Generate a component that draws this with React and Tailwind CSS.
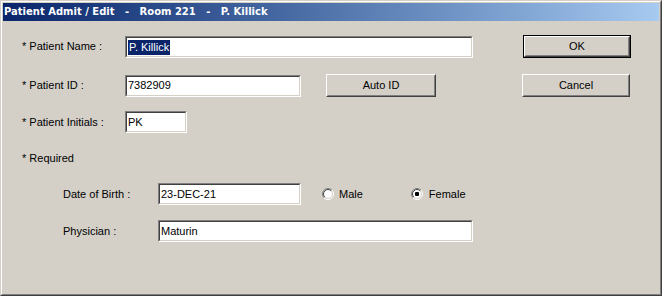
import React from "react";

const font = { fontFamily: '"Liberation Sans", Arial, sans-serif' };

function Sunken({ className = "", children }) {
  return (
    <div className={"border border-t-[#808080] border-l-[#808080] border-b-white border-r-white " + className}>
      <div className="h-full w-full border border-t-[#404040] border-l-[#404040] border-b-[#d4d0c8] border-r-[#d4d0c8] bg-white flex items-center pl-[1px] text-[11px] text-black leading-none">
        {children}
      </div>
    </div>
  );
}

function Button({ className = "", children, isDefault = false }) {
  const inner = (
    <div className="h-full w-full border border-t-white border-l-white border-b-[#404040] border-r-[#404040]">
      <div className="h-full w-full border border-t-[#d4d0c8] border-l-[#d4d0c8] border-b-[#808080] border-r-[#808080] flex items-center justify-center text-[11px] text-black leading-none">
        {children}
      </div>
    </div>
  );
  if (isDefault) {
    return <div className={"border border-black " + className}>{inner}</div>;
  }
  return <div className={className}>{inner}</div>;
}

function Radio({ checked }) {
  const a = 6 - 5.5 * Math.SQRT1_2;
  const b = 6 + 5.5 * Math.SQRT1_2;
  const c = 6 - 4.5 * Math.SQRT1_2;
  const d = 6 + 4.5 * Math.SQRT1_2;
  return (
    <svg width="12" height="12" viewBox="0 0 12 12" className="shrink-0">
      <circle cx="6" cy="6" r="5" fill="#ffffff" />
      <path d={`M${a} ${b} A5.5 5.5 0 0 1 ${b} ${a}`} fill="none" stroke="#808080" strokeWidth="1" />
      <path d={`M${b} ${a} A5.5 5.5 0 0 1 ${a} ${b}`} fill="none" stroke="#ffffff" strokeWidth="1" />
      <path d={`M${c} ${d} A4.5 4.5 0 0 1 ${d} ${c}`} fill="none" stroke="#404040" strokeWidth="1" />
      <path d={`M${d} ${c} A4.5 4.5 0 0 1 ${c} ${d}`} fill="none" stroke="#d4d0c8" strokeWidth="1" />
      {checked && <rect x="4" y="4" width="4" height="4" rx="1" fill="#000000" />}
    </svg>
  );
}

export default function App() {
  return (
    <div
      className="w-[662px] h-[296px] bg-[#d4d0c8] border border-t-[#d4d0c8] border-l-[#d4d0c8] border-b-[#404040] border-r-[#404040] overflow-hidden"
      style={font}
    >
      <div className="h-full w-full border border-t-white border-l-white border-b-[#808080] border-r-[#808080] p-[1px] flex flex-col">
        <div
          className="h-[18px] shrink-0 flex items-center pl-[1px] bg-gradient-to-r from-[#0a246a] to-[#a6caf0] text-white text-[10px] font-bold whitespace-pre leading-none"
          style={{ fontFamily: '"DejaVu Sans", Verdana, sans-serif' }}
        >
          Patient Admit / Edit   -   Room 221   -   P. Killick
        </div>

        <div className="flex flex-col pl-[19px] text-[11px] text-black leading-none">
          {/* Row 1 */}
          <div className="mt-[14px] flex items-center h-[23px]">
            <div className="w-[103px]">* Patient Name :</div>
            <Sunken className="w-[348px] h-[22px] mt-[1px]">
              <span className="bg-[#0a246a] text-white px-[1px] py-[2px]">P. Killick</span>
            </Sunken>
            <Button isDefault className="ml-[50px] w-[108px] h-[23px]">OK</Button>
          </div>

          {/* Row 2 */}
          <div className="mt-[16px] flex items-center h-[23px]">
            <div className="w-[103px]">* Patient ID :</div>
            <Sunken className="w-[176px] h-[22px]">7382909</Sunken>
            <Button className="ml-[25px] w-[110px] h-[23px]">Auto ID</Button>
            <Button className="ml-[86px] w-[108px] h-[23px]">Cancel</Button>
          </div>

          {/* Row 3 */}
          <div className="mt-[14px] flex items-center h-[22px]">
            <div className="w-[103px]">* Patient Initials :</div>
            <Sunken className="w-[62px] h-[22px]">PK</Sunken>
          </div>

          {/* Row 4 */}
          <div className="mt-[18px] h-[14px] flex items-center">* Required</div>

          {/* Row 5 */}
          <div className="mt-[18px] flex items-center h-[22px] pl-[41px]">
            <div className="w-[95px]">Date of Birth :</div>
            <Sunken className="w-[143px] h-[22px]">23-DEC-21</Sunken>
            <div className="ml-[21px] flex items-center gap-[5px]">
              <Radio checked={false} />
              <span>Male</span>
            </div>
            <div className="ml-[48px] flex items-center gap-[6px]">
              <Radio checked={true} />
              <span>Female</span>
            </div>
          </div>

          {/* Row 6 */}
          <div className="mt-[15px] flex items-center h-[22px] pl-[41px]">
            <div className="w-[95px]">Physician :</div>
            <Sunken className="w-[315px] h-[22px]">Maturin</Sunken>
          </div>
        </div>
      </div>
    </div>
  );
}
